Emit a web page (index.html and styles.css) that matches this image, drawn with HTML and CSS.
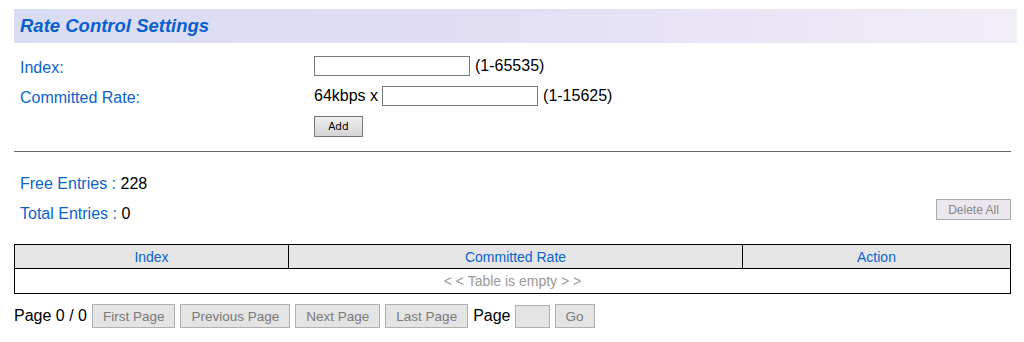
FILE: index.html
```html
<!DOCTYPE html>
<html lang="en">
<head>
    <meta charset="UTF-8">
    <title>Rate Control Settings</title>
    <link rel="stylesheet" href="styles.css">
</head>
<body>

<div class="page">

    <div class="title-bar">Rate Control Settings</div>

    <div class="form">
        <label class="label">Index:</label>
        <div class="field">
            <input type="text" class="text-input">
            <span class="hint">(1-65535)</span>
        </div>

        <label class="label">Committed Rate:</label>
        <div class="field">
            <span class="prefix">64kbps x</span>
            <input type="text" class="text-input">
            <span class="hint">(1-15625)</span>
        </div>

        <div></div>
        <div class="field">
            <button class="add-btn">Add</button>
        </div>
    </div>

    <hr class="divider">

    <div class="entries">
        <div class="entry-row">
            <span class="entry-text"><span class="label">Free Entries :</span> 228</span>
        </div>
        <div class="entry-row">
            <span class="entry-text"><span class="label">Total Entries :</span> 0</span>
            <button class="delete-btn" disabled>Delete All</button>
        </div>
    </div>

    <table class="entry-table">
        <thead>
            <tr>
                <th class="col-index">Index</th>
                <th class="col-rate">Committed Rate</th>
                <th class="col-action">Action</th>
            </tr>
        </thead>
        <tbody>
            <tr>
                <td colspan="3" class="empty">&lt; &lt; Table is empty &gt; &gt;</td>
            </tr>
        </tbody>
    </table>

    <div class="pager">
        <span class="pager-text">Page 0 / 0</span>
        <button class="pager-btn" disabled>First Page</button>
        <button class="pager-btn" disabled>Previous Page</button>
        <button class="pager-btn" disabled>Next Page</button>
        <button class="pager-btn" disabled>Last Page</button>
        <span class="pager-text">Page</span>
        <input type="text" class="page-input" disabled>
        <button class="pager-btn go-btn" disabled>Go</button>
    </div>

</div>

</body>
</html>
```

FILE: styles.css
```css
body {
    margin: 0;
    font-family: Arial, "Liberation Sans", sans-serif;
    font-size: 16px;
    color: #000;
    background: #fff;
}

.page {
    padding: 9px 13px 0 14px;
}

.title-bar {
    height: 34px;
    margin-right: -6px;
    padding-left: 6px;
    line-height: 33px;
    font-size: 18.5px;
    font-weight: bold;
    font-style: italic;
    color: #0a5fd0;
    background: linear-gradient(90deg, #d9ddf3 0%, #e1def4 45%, #ece6f6 80%, #f2eef8 100%);
}

.form {
    display: grid;
    grid-template-columns: 294px auto;
    grid-auto-rows: 20px;
    row-gap: 10px;
    align-items: center;
    margin-top: 13px;
    padding-left: 6px;
}

.label {
    color: #0a64cc;
}

.form .label {
    height: 20px;
    line-height: 24px;
}

.field {
    display: flex;
    align-items: center;
    height: 20px;
}

.text-input {
    width: 156px;
    height: 20px;
    box-sizing: border-box;
    margin: 0;
    padding: 1px;
    border: 1px solid #7a7a7a;
    font-family: inherit;
}

.hint {
    margin-left: 5px;
}

.prefix {
    margin-right: 4px;
}

.add-btn {
    width: 49px;
    height: 21px;
    margin: 0;
    padding: 0;
    border: 1px solid #777;
    background: linear-gradient(#f0f0f0, #d4d4d4);
    font-family: Tahoma, "DejaVu Sans", sans-serif;
    font-size: 10.5px;
    color: #000;
}

.divider {
    margin: 15px 0 0;
    border: none;
    border-top: 1px solid #6e6464;
}

.entries {
    margin-top: 15px;
    padding-left: 6px;
}

.entry-row {
    display: flex;
    align-items: center;
    height: 30px;
}

.entry-text {
    padding-top: 4px;
}

.delete-btn {
    margin: 0 0 5px auto;
    width: 75px;
    height: 21px;
    padding: 0;
    border: 1px solid #aaa;
    background: #ece6ee;
    color: #888;
    font-family: Arial, "Liberation Sans", sans-serif;
    font-size: 12px;
}

.entry-table {
    width: 100%;
    margin-top: 17px;
    border-collapse: collapse;
    font-size: 14px;
}

.entry-table th,
.entry-table td {
    border: 1px solid #000;
    padding: 0;
    text-align: center;
}

.entry-table th {
    height: 23px;
    font-weight: normal;
    color: #0a64cc;
    background: #e6e6e6;
}

.col-index {
    width: 273px;
}

.col-rate {
    width: 453px;
}

.entry-table td.empty {
    height: 24px;
    color: #999;
}

.pager {
    display: flex;
    align-items: center;
    gap: 5px;
    margin-top: 10px;
}

.pager-btn {
    height: 24px;
    margin: 0;
    padding: 0 10px;
    border: 1px solid #b0b0b0;
    background: #e4e4e4;
    color: #7a7a7a;
    font-family: Arial, "Liberation Sans", sans-serif;
    font-size: 13.5px;
}

.page-input {
    width: 35px;
    height: 23px;
    box-sizing: border-box;
    margin: 0 0 0 -1px;
    border: 1px solid #b0b0b0;
    background: #e4e4e4;
}

.go-btn {
    width: 40px;
    padding: 0;
}
```
